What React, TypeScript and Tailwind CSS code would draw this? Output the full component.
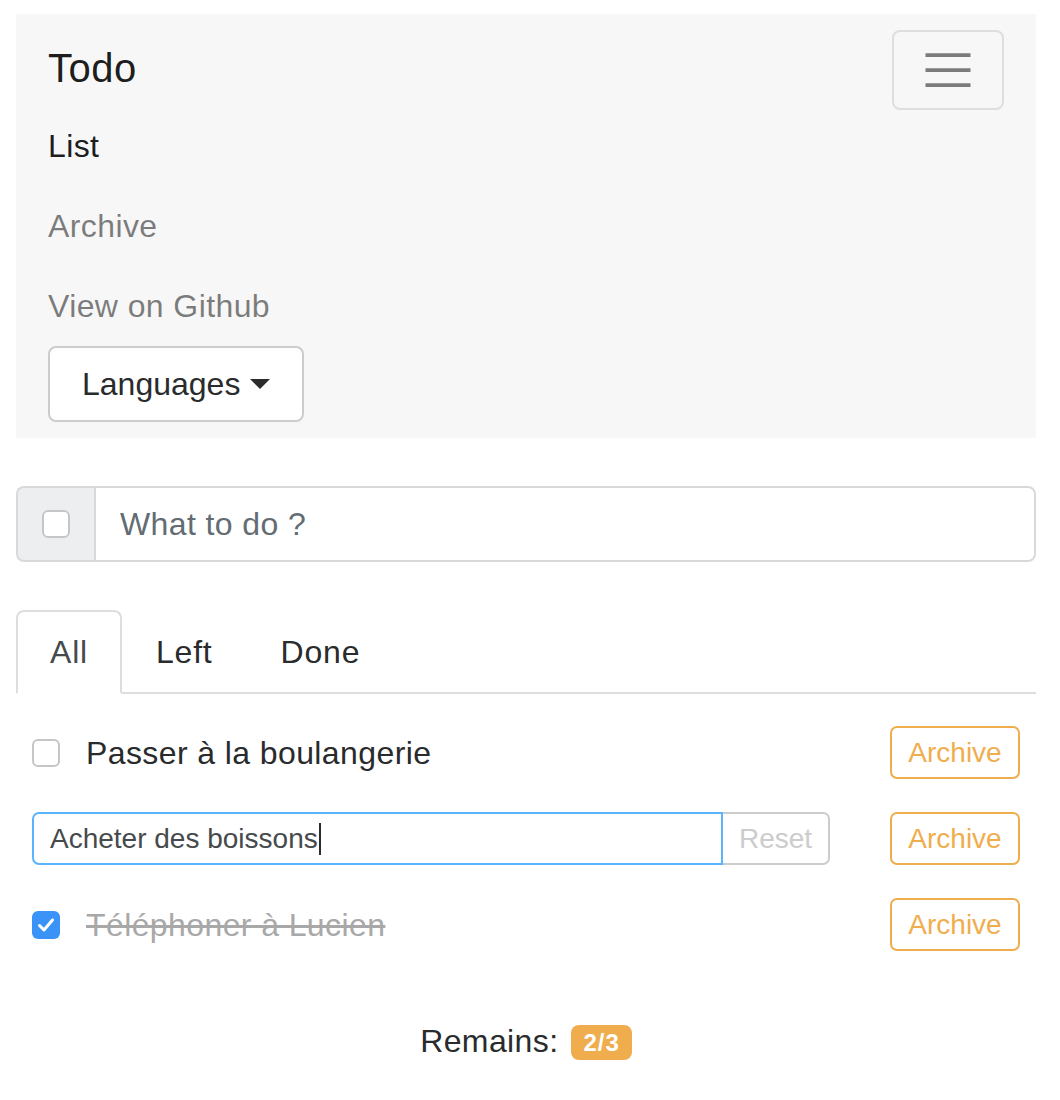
import { useState } from "react"

interface Todo {
  id: number
  label: string
  done: boolean
  editing?: boolean
}

function Box({ checked }: { checked: boolean }) {
  if (checked) {
    return (
      <span className="flex h-[28px] w-[28px] shrink-0 items-center justify-center rounded-[6px] bg-[#3a94f7]">
        <svg width="24" height="24" viewBox="0 0 24 24" fill="none">
          <path d="M5.5 12.5l4.5 4.5 8.5-10" stroke="#fff" strokeWidth="3" strokeLinecap="round" strokeLinejoin="round" />
        </svg>
      </span>
    )
  }
  return <span className="block h-[28px] w-[28px] shrink-0 rounded-[6px] border-2 border-[#c6c6c6] bg-white" />
}

function ArchiveButton() {
  return (
    <button
      type="button"
      className="h-[53px] w-[130px] shrink-0 rounded-[7px] border-2 border-[#f0ad4e] bg-white text-[28px] tracking-normal text-[#f0ad4e]"
    >
      Archive
    </button>
  )
}

export default function App() {
  const [todos] = useState<Todo[]>([
    { id: 1, label: "Passer à la boulangerie", done: false },
    { id: 2, label: "Acheter des boissons", done: false, editing: true },
    { id: 3, label: "Téléphoner à Lucien", done: true },
  ])
  const [tab, setTab] = useState("All")

  const left = todos.filter((t) => !t.done).length

  return (
    <div className="min-h-screen bg-white pl-4 pr-6 pt-[14px] pb-8 font-['Liberation_Sans',Arial,sans-serif] text-[#292b2c] tracking-[0.4px]">
      {/* Navbar */}
      <nav className="bg-[#f7f7f7] px-8 py-4">
        <div className="flex h-[76px] items-start justify-between">
          <a className="py-2 text-[40px] leading-[60px] tracking-[0.5px] text-black/90">Todo</a>
          <button
            type="button"
            className="flex h-[80px] w-[112px] items-center justify-center rounded-lg border-2 border-[#dedede]"
          >
            <svg width="60" height="60" viewBox="0 0 32 32">
              <path d="M4 8h24M4 16h24M4 24h24" stroke="rgba(0,0,0,0.5)" strokeWidth="2" />
            </svg>
          </button>
        </div>
        <ul className="flex flex-col">
          <li className="py-4 text-[32px] leading-[48px] text-black/90">List</li>
          <li className="py-4 text-[32px] leading-[48px] text-black/50">Archive</li>
          <li className="py-4 text-[32px] leading-[48px] text-black/50">View on Github</li>
        </ul>
        <button
          type="button"
          className="flex h-[76px] items-center rounded-lg border-2 border-[#cccccc] bg-white px-8 text-[32px] tracking-normal text-[#292b2c]"
        >
          Languages
          <span className="ml-[10px] h-0 w-0 border-x-[10px] border-t-[10px] border-x-transparent border-t-[#292b2c]" />
        </button>
      </nav>

      {/* New todo */}
      <div className="mt-12 flex h-[76px]">
        <div className="flex w-[78px] items-center rounded-l-lg border-2 border-r-0 border-[#d9d9d9] bg-[#eceeef] pl-6">
          <Box checked={false} />
        </div>
        <input
          type="text"
          placeholder="What to do ?"
          className="flex-1 rounded-r-lg border-2 border-[#d9d9d9] px-6 text-[32px] tracking-[0.4px] text-[#464a4c] outline-none placeholder:text-[#636c72]"
        />
      </div>

      {/* Tabs */}
      <ul className="mt-12 flex border-b-2 border-[#dddddd]">
        {["All", "Left", "Done"].map((t) => (
          <li key={t} className="-mb-[2px]">
            <button
              type="button"
              onClick={() => setTab(t)}
              className={
                tab === t
                  ? "rounded-t-lg border-2 border-[#dddddd] border-b-white bg-white px-8 py-4 text-[32px] leading-[48px] tracking-[0.8px] text-[#464a4c]"
                  : "rounded-t-lg border-2 border-transparent px-8 py-4 text-[32px] leading-[48px] tracking-[0.8px] text-[#292b2c]"
              }
            >
              {t}
            </button>
          </li>
        ))}
      </ul>

      {/* Todo list */}
      <div className="mt-[32px] flex flex-col gap-[33px] px-4">
        {todos.map((todo) =>
          todo.editing ? (
            <div key={todo.id} className="flex h-[53px] items-center">
              <div className="flex h-full flex-1">
                <div className="flex flex-1 items-center rounded-l-[7px] border-2 border-[#5cb3fd] px-4 text-[28px] tracking-normal text-[#464a4c]">
                  {todo.label}
                  <span className="ml-[1px] h-[32px] w-[2px] bg-[#292b2c]" />
                </div>
                <button
                  type="button"
                  className="w-[107px] rounded-r-[7px] border-2 border-l-0 border-[#cccccc] bg-white text-[28px] tracking-normal text-[#cccccc]"
                >
                  Reset
                </button>
              </div>
              <div className="ml-[60px]">
                <ArchiveButton />
              </div>
            </div>
          ) : (
            <div key={todo.id} className="flex h-[53px] items-center">
              <Box checked={todo.done} />
              <span
                className={
                  todo.done
                    ? "ml-[26px] text-[32px] text-[#a8a8a8] line-through"
                    : "ml-[26px] text-[32px] text-[#292b2c]"
                }
              >
                {todo.label}
              </span>
              <div className="ml-auto">
                <ArchiveButton />
              </div>
            </div>
          )
        )}
      </div>

      {/* Footer */}
      <div className="mt-[66px] flex items-center justify-center text-[32px] leading-[48px]">
        <span>Remains:</span>
        <span className="ml-[13px] mt-[3px] flex h-[35px] items-center rounded-lg bg-[#f0ad4e] px-[12px] text-[24px] font-bold tracking-[1px] text-white">
          {left}/{todos.length}
        </span>
      </div>
    </div>
  )
}
